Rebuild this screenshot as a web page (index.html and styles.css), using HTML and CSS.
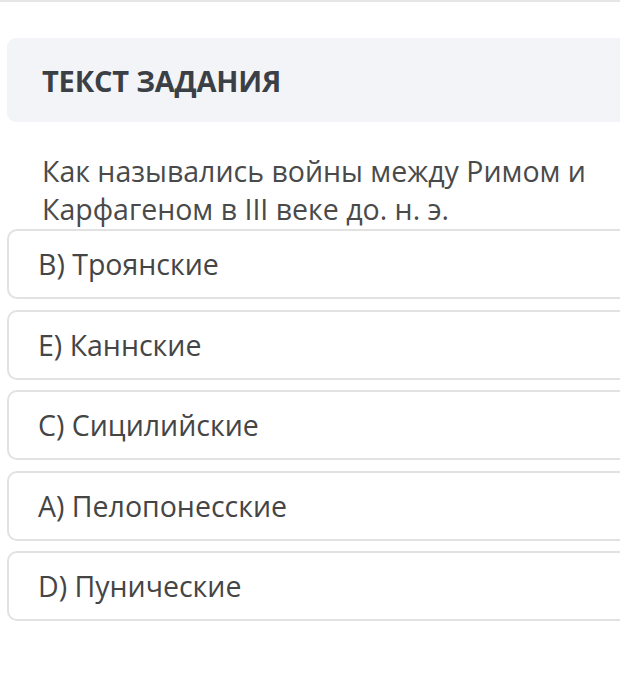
FILE: index.html
```html
<!DOCTYPE html>
<html lang="ru">
<head>
<meta charset="utf-8">
<link rel="stylesheet" href="styles.css">
</head>
<body>
<div class="topline"></div>
<div class="task">
  <div class="task-head"><h2 class="task-title">ТЕКСТ ЗАДАНИЯ</h2></div>
  <p class="question">Как назывались войны между Римом и Карфагеном в III веке до. н. э.</p>
  <div class="options">
    <div class="option">B) Троянские</div>
    <div class="option">E) Каннские</div>
    <div class="option">C) Сицилийские</div>
    <div class="option">A) Пелопонесские</div>
    <div class="option">D) Пунические</div>
  </div>
</div>
</body>
</html>
```
FILE: styles.css
```css
html, body {
  margin: 0;
  padding: 0;
  background: #ffffff;
  font-family: "Open Sans", "Noto Sans", sans-serif;
  color: #444;
  overflow: hidden;
}
.topline {
  height: 2px;
  background: #e6e6e6;
}
.task {
  padding: 36px 0 0 7px;
  width: 640px;
}
.task-head {
  background: #f3f4f7;
  border-radius: 9px;
  height: 84px;
  display: flex;
  align-items: center;
  padding-left: 35px;
}
.task-title {
  margin: 0;
  font-size: 29px;
  font-weight: 700;
  color: #3b3f46;
  letter-spacing: -0.2px;
}
.question {
  margin: 30px 0 0 35px;
  width: 580px;
  font-size: 28.5px;
  line-height: 38px;
  color: #4a4a4a;
}
.options {
  display: flex;
  flex-direction: column;
  gap: 10.5px;
  margin-top: 1px;
}
.option {
  height: 66px;
  border: 2px solid #e2e2e2;
  border-radius: 10px;
  display: flex;
  align-items: center;
  padding-left: 29px;
  font-size: 28.5px;
  color: #454545;
}
```
